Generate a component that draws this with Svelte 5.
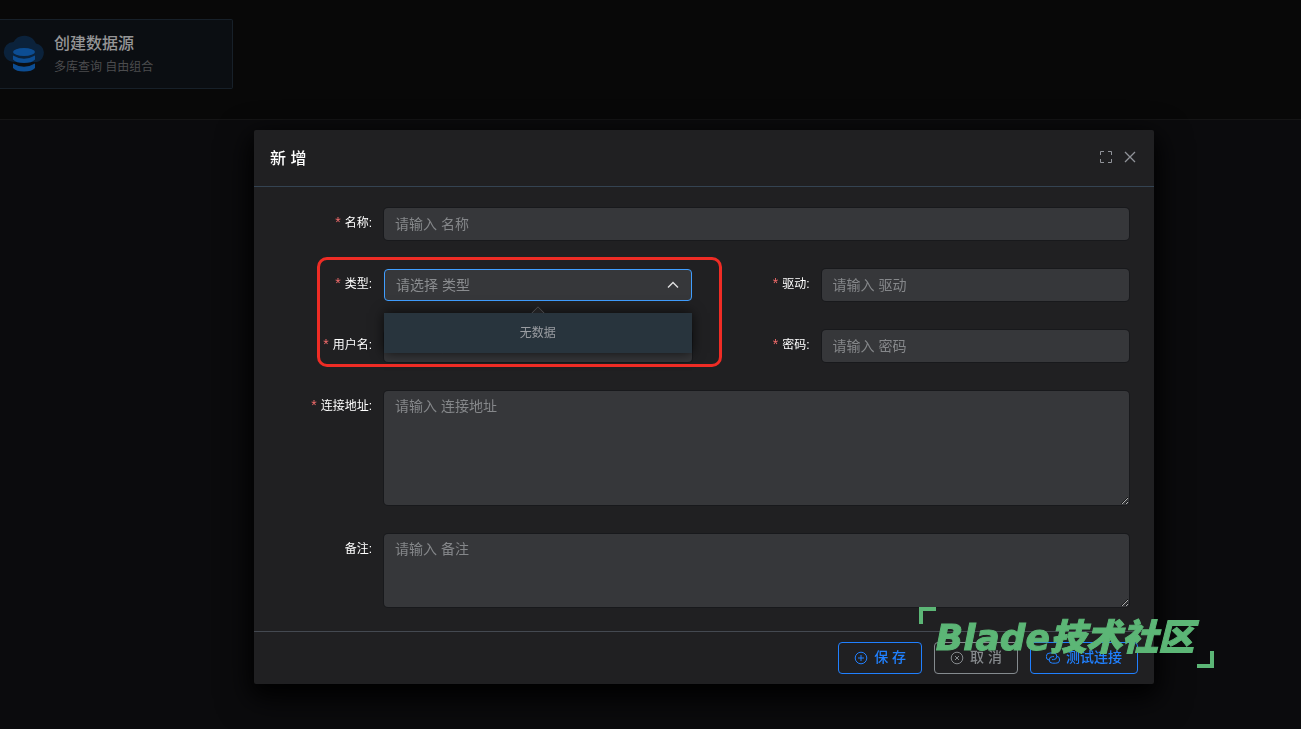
<script>
  const form = $state({
    name: '',
    type: '',
    driver: '',
    username: '',
    password: '',
    url: '',
    remark: ''
  });
</script>

{#snippet label(id, text, required = true)}
  <label for={id}>
    {#if required}<span class="star">*</span>{/if}{text}:
  </label>
{/snippet}

<main class="page">
  <header class="band">
    <a class="card" href="#create">
      <svg class="card-icon" viewBox="0 0 42 42" aria-hidden="true">
        <path
          d="M11 29A10 10 0 0 1 10.500 9A12.500 12.500 0 0 1 33 10.500A9.500 9.500 0 0 1 34 29Z"
          fill="#0b223b"
        />
        <ellipse cx="21" cy="19" rx="11" ry="4" fill="#0c4d93" />
        <path d="M10 22.500q11 6.500 22 0v4q-3 3.500-11 3.500t-11-3.500z" fill="#0c4d93" />
        <path d="M10 30.500q11 6.500 22 0v4.500q-3 3.500-11 3.500t-11-3.500z" fill="#0c4d93" />
      </svg>
      <span class="card-text">
        <strong>创建数据源</strong>
        <small>多库查询 自由组合</small>
      </span>
    </a>
  </header>
</main>

<div class="overlay">
  <div class="dialog" role="dialog" aria-labelledby="dialog-title">
    <div class="head">
      <h2 id="dialog-title">新 增</h2>
      <div class="tools">
        <button class="tool" type="button" aria-label="全屏">
          <svg viewBox="0 0 16 16"><path d="M2.500 6V2.500H6M10 2.500h3.500V6M13.500 10v3.500H10M6 13.500H2.500V10" /></svg>
        </button>
        <button class="tool" type="button" aria-label="关闭">
          <svg viewBox="0 0 16 16"><path d="M3 3l10 10M13 3L3 13" stroke-width="1.300" /></svg>
        </button>
      </div>
    </div>

    <form class="body" onsubmit={(e) => e.preventDefault()}>
      <div class="field wide">
        {@render label('name', '名称')}
        <input id="name" placeholder="请输入 名称" bind:value={form.name} />
      </div>
      <div class="field">
        {@render label('type', '类型')}
        <div class="select">
          <select id="type" bind:value={form.type}>
            <option value="">请选择 类型</option>
          </select>
          <svg class="caret" viewBox="0 0 14 14" aria-hidden="true"><path d="M2 9.500l5-5 5 5" stroke-width="1.400" /></svg>
          <div class="popper">无数据</div>
        </div>
        <div class="highlight"></div>
      </div>
      <div class="field">
        {@render label('driver', '驱动')}
        <input id="driver" placeholder="请输入 驱动" bind:value={form.driver} />
      </div>
      <div class="field">
        {@render label('username', '用户名')}
        <input id="username" placeholder="请输入 用户名" bind:value={form.username} />
      </div>
      <div class="field">
        {@render label('password', '密码')}
        <input id="password" placeholder="请输入 密码" bind:value={form.password} />
      </div>
      <div class="field wide">
        {@render label('url', '连接地址')}
        <textarea id="url" class="tall" placeholder="请输入 连接地址" bind:value={form.url}></textarea>
      </div>
      <div class="field wide">
        {@render label('remark', '备注', false)}
        <textarea id="remark" placeholder="请输入 备注" bind:value={form.remark}></textarea>
      </div>
    </form>

    <div class="foot">
      <button class="btn primary" type="button">
        <svg viewBox="0 0 14 14"><circle cx="7" cy="7" r="5.800" /><path d="M7 4v6M4 7h6" /></svg>
        <span>保 存</span>
      </button>
      <button class="btn" type="button">
        <svg viewBox="0 0 14 14"><circle cx="7" cy="7" r="5.800" /><path d="M5 5l4 4M9 5l-4 4" /></svg>
        <span>取 消</span>
      </button>
      <button class="btn primary" type="button">
        <svg viewBox="0 0 14 14">
          <path d="M3.500 9.200A3.300 3.300 0 0 1 4.200 2H7.500a3.300 3.300 0 0 1 0 6.600H6" />
          <path d="M10.500 5.200A3.300 3.300 0 0 1 9.800 12.200H6.500a3.300 3.300 0 0 1 0-6.600H8" />
        </svg>
        <span>测试连接</span>
      </button>
    </div>
    <div class="watermark">Blade技术社区</div>
  </div>
</div>

<style>
  :global(body) {
    margin: 0;
    background: #0b0b0d;
    font-family: 'Liberation Sans', 'Noto Sans CJK SC', sans-serif;
  }

  *,
  *::before,
  *::after {
    box-sizing: border-box;
  }

  button,
  input,
  select,
  textarea {
    font-family: inherit;
  }

  svg {
    fill: none;
    stroke: currentColor;
    flex: none;
  }

  .page {
    min-height: 100vh;
  }

  .band {
    display: flex;
    padding: 19px 0 30px;
    background: #080808;
    border-bottom: 1px solid #151516;
  }

  .card {
    display: flex;
    align-items: center;
    gap: 9px;
    width: 233px;
    height: 70px;
    padding: 0 3px;
    background: #0b0e12;
    border: 1px solid #172029;
    border-left: 0;
    border-radius: 0 2px 2px 0;
    text-decoration: none;
  }

  .card-icon {
    width: 42px;
    height: 42px;
    stroke: none;
  }

  .card-text {
    display: flex;
    flex-direction: column;
    padding-top: 2px;
  }

  .card-text strong {
    font-size: 16px;
    line-height: 24px;
    font-weight: 500;
    color: #959596;
  }

  .card-text small {
    font-size: 12px;
    line-height: 22px;
    color: #4b4c4e;
  }

  .overlay {
    position: fixed;
    inset: 0;
    padding: 130px 147px 45px 254px;
    overflow: auto;
  }

  .dialog {
    position: relative;
    background: #202022;
    border-radius: 2px;
    box-shadow: 0 12px 32px 4px #000000b0, 0 8px 20px #000000c0;
  }

  .head {
    display: flex;
    align-items: center;
    justify-content: space-between;
    height: 57px;
    padding: 0 16px;
    border-bottom: 1px solid #344352;
  }

  h2 {
    margin: 0;
    padding-top: 2px;
    font-size: 16px;
    line-height: 24px;
    font-weight: 500;
    color: #fff;
  }

  .tools {
    display: flex;
    gap: 8px;
    padding-bottom: 2px;
  }

  .tool {
    display: flex;
    width: 16px;
    height: 16px;
    padding: 0;
    border: 0;
    background: none;
    color: #909399;
  }

  .tool svg {
    width: 16px;
    height: 16px;
  }

  .body {
    display: grid;
    grid-template-columns: 1fr 1fr;
    row-gap: 29px;
    padding: 21px 25px 24px 0;
  }

  .field {
    position: relative;
    display: flex;
    align-items: flex-start;
  }

  .wide {
    grid-column: span 2;
  }

  label {
    flex: none;
    width: 130px;
    padding-right: 12px;
    text-align: right;
    font-size: 12px;
    line-height: 31px;
    color: #fff;
  }

  .star {
    margin-right: 4px;
    font-size: 14px;
    line-height: 16px;
    color: #f56c6c;
  }

  input,
  select,
  textarea {
    display: block;
    flex: 1;
    width: 100%;
    min-width: 0;
    height: 32px;
    margin: 0;
    padding: 0 11px;
    border: 0;
    border-radius: 4px;
    outline: none;
    background: #36373a;
    box-shadow: 0 0 0 1px #18191c;
    font-size: 14px;
    color: #cfd3dc;
  }

  textarea {
    height: 73px;
    padding: 5px 11px;
    line-height: 21px;
    resize: vertical;
  }

  .tall {
    height: 114px;
  }

  ::placeholder {
    color: #85878a;
    opacity: 1;
  }

  .select {
    position: relative;
    flex: 1;
  }

  select {
    appearance: none;
    border: 1px solid #409eff;
    box-shadow: none;
    color: #8a8c8f;
  }

  .caret {
    position: absolute;
    top: 9px;
    right: 12px;
    width: 14px;
    height: 14px;
    color: #e0e0e0;
    pointer-events: none;
  }

  .popper {
    position: absolute;
    z-index: 2;
    top: 44px;
    left: 0;
    right: 0;
    background: #28343d;
    box-shadow: 0 0 12px #000000b8;
    text-align: center;
    font-size: 12px;
    line-height: 40px;
    color: #9a9da2;
  }

  .popper::before {
    content: '';
    position: absolute;
    z-index: -1;
    top: -5px;
    left: 50%;
    width: 10px;
    height: 10px;
    margin-left: -5px;
    background: #202022;
    border: 1px solid #4c4d4f;
    transform: rotate(45deg);
    clip-path: polygon(0 0, 100% 0, 0 100%);
  }

  .highlight {
    position: absolute;
    z-index: 3;
    top: -12px;
    left: 63px;
    right: -30px;
    height: 110px;
    border: 3px solid #ef2c25;
    border-radius: 10px;
    pointer-events: none;
  }

  .foot {
    display: flex;
    justify-content: flex-end;
    gap: 12px;
    padding: 10px 16px;
    border-top: 1px solid #444951;
  }

  .btn {
    display: flex;
    align-items: center;
    gap: 6px;
    height: 32px;
    padding: 0 15px;
    border: 1px solid #858b8f;
    border-radius: 4px;
    background: transparent;
    font-size: 14px;
    line-height: 20px;
    font-weight: 500;
    white-space: nowrap;
    color: #85898c;
  }

  .btn span {
    padding-bottom: 2px;
  }

  .primary {
    border-color: #2080ff;
    color: #2080ff;
  }

  .btn svg {
    width: 14px;
    height: 14px;
  }

  .watermark {
    position: absolute;
    right: -60px;
    bottom: 16px;
    padding: 4px 20px 4px 17px;
    font-family: 'DejaVu Sans', 'Noto Sans CJK SC', sans-serif;
    font-size: 36px;
    line-height: 53px;
    font-weight: 900;
    font-style: italic;
    white-space: nowrap;
    color: #5cb676;
    -webkit-text-stroke: 1px #5cb676;
    pointer-events: none;
  }

  .watermark::before,
  .watermark::after {
    content: '';
    position: absolute;
    width: 17px;
    height: 17px;
  }

  .watermark::before {
    top: 0;
    left: 0;
    border-top: 4px solid;
    border-left: 4px solid;
  }

  .watermark::after {
    right: 0;
    bottom: 0;
    border-right: 4px solid;
    border-bottom: 4px solid;
  }
</style>
